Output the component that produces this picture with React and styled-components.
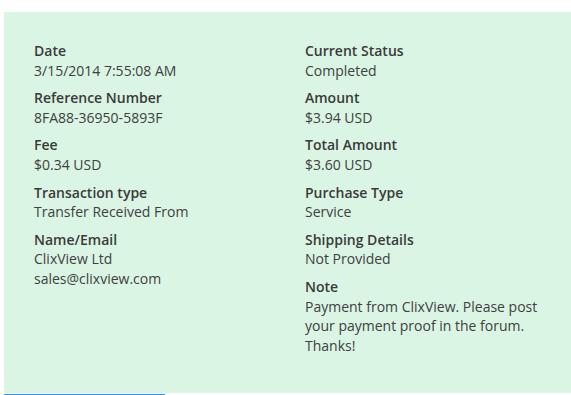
import React from 'react'
import styled, { createGlobalStyle } from 'styled-components'

const GlobalStyle = createGlobalStyle`
  body {
    margin: 0;
    background: #ffffff;
    font-family: 'Open Sans', 'Noto Sans', sans-serif;
    color: #3a3a3a;
  }
`

const leftColumn = [
  { label: 'Date', lines: ['3/15/2014 7:55:08 AM'] },
  { label: 'Reference Number', lines: ['8FA88-36950-5893F'] },
  { label: 'Fee', lines: ['$0.34 USD'] },
  { label: 'Transaction type', lines: ['Transfer Received From'] },
  { label: 'Name/Email', lines: ['ClixView Ltd', 'sales@clixview.com'] },
]

const rightColumn = [
  { label: 'Current Status', lines: ['Completed'] },
  { label: 'Amount', lines: ['$3.94 USD'] },
  { label: 'Total Amount', lines: ['$3.60 USD'] },
  { label: 'Purchase Type', lines: ['Service'] },
  { label: 'Shipping Details', lines: ['Not Provided'] },
  {
    label: 'Note',
    lines: ['Payment from ClixView. Please post your payment proof in the forum. Thanks!'],
  },
]

const DetailColumn = ({ items }) => (
  <Column>
    {items.map(({ label, lines }) => (
      <Field key={label}>
        <Label>{label}</Label>
        {lines.map((line) => (
          <Value key={line}>{line}</Value>
        ))}
      </Field>
    ))}
  </Column>
)

const App = () => (
  <>
    <GlobalStyle />
    <Page>
      <Card>
        <DetailColumn items={leftColumn} />
        <DetailColumn items={rightColumn} />
      </Card>
      <TabBar>
        <ActiveTab />
      </TabBar>
    </Page>
  </>
)

export default App

const Page = styled.div`
  padding: 12px 0 0 4px;
`

const Card = styled.div`
  display: grid;
  grid-template-columns: 271px 236px;
  align-items: start;
  box-sizing: border-box;
  height: 381px;
  padding: 29px 30px;
  background-color: #daf5e4;
`

const Column = styled.div`
  display: flex;
  flex-direction: column;
  gap: 8px;
`

const Field = styled.div`
  display: flex;
  flex-direction: column;
`

const Label = styled.div`
  font-size: 14px;
  line-height: 19.6px;
  font-weight: 600;
  color: #3a3a3a;
`

const Value = styled.div`
  font-size: 14px;
  line-height: 19.6px;
  color: #404040;
`

const TabBar = styled.div`
  padding-top: 1px;
`

const ActiveTab = styled.div`
  width: 161px;
  height: 2px;
  background-color: #2b95f5;
`
